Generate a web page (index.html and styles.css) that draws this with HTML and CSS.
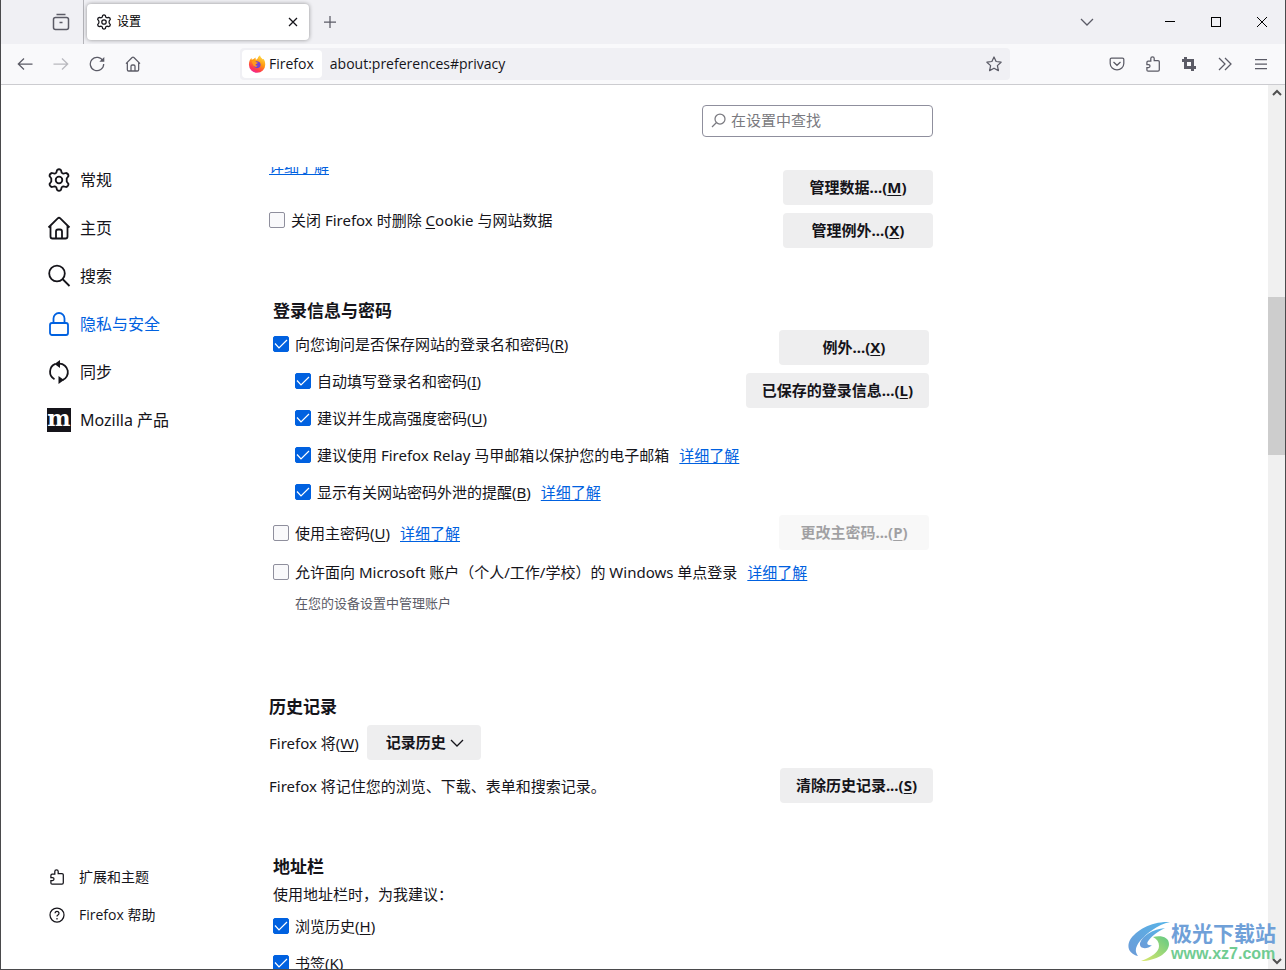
FILE: index.html
```html
<!DOCTYPE html>
<html lang="zh-CN">
<head>
<meta charset="utf-8">
<title>设置</title>
<link rel="stylesheet" href="styles.css">
</head>
<body>
<svg class="defs" aria-hidden="true">
  <symbol id="gear" viewBox="0 0 24 24"><path stroke-linejoin="round" d="M10 2.200q2-1.800 4 0l.7 2.600 1.600.9 2.700-.7q2.300.4 2.500 3l-1.800 2.500v3l1.800 2.500q-.2 2.600-2.500 3l-2.700-.7-1.600.9-.7 2.600q-2 1.800-4 0l-.7-2.600-1.600-.9-2.700.7q-2.300-.4-2.500-3l1.800-2.500v-3L2.500 8q.2-2.600 2.500-3l2.700.7 1.600-.9z"/><circle cx="12" cy="12" r="3.300"/></symbol>
  <symbol id="home" viewBox="0 0 24 24"><path d="M1.500 11.500 10.700 2.300q1.300-1.200 2.600 0l9.200 9.200M3.500 10v10.500q0 2 2 2h13q2 0 2-2V10M9 22v-6.500q0-2 2-2h2q2 0 2 2V22"/></symbol>
  <symbol id="puzzle" viewBox="0 0 16 16"><path d="M5.800 5.200V2.500a1.700 1.700 0 0 1 3.400 0V4.500h3.800q1.300 0 1.300 1.300v8q0 1.300-1.300 1.300H3.100Q1.900 15.100 1.900 13.900V11.500h1.600a1.500 1.500 0 0 0 0-3H1.900V6.400q0-1.200 1.200-1.200z"/></symbol>
</svg>
<div class="window">
  <header class="tabs">
    <button class="icon-btn view-btn" aria-label="Firefox View"><svg class="ico s18" viewBox="0 0 18 18"><path stroke-width="1.500" d="M4.500 1.500h9M1.500 6.500q0-2 2-2h11q2 0 2 2v8q0 2-2 2h-11q-2 0-2-2zM7.500 9.500h3"/></svg></button>
    <div class="tab">
      <svg class="ico s16 dark"><use href="#gear"/></svg>
      <span class="tab-title">设置</span>
      <button class="icon-btn close" aria-label="关闭标签页"><svg class="ico s10 dark" viewBox="0 0 10 10"><path d="m1 1 8 8M9 1 1 9"/></svg></button>
    </div>
    <button class="icon-btn new-tab" aria-label="新建标签页"><svg class="ico s12" viewBox="0 0 12 12"><path d="M6 0v12M0 6h12"/></svg></button>
    <span class="spacer"></span>
    <button class="icon-btn all-tabs" aria-label="列出所有标签页"><svg class="ico s14" viewBox="0 0 14 14"><path d="m1 4 6 6 6-6"/></svg></button>
    <button class="icon-btn win" aria-label="最小化"><svg class="ico s12 crisp" viewBox="0 0 12 12"><path d="M1 5.500h10"/></svg></button>
    <button class="icon-btn win" aria-label="最大化"><svg class="ico s12 crisp" viewBox="0 0 12 12"><path d="M1.500 1.500h9v9h-9z"/></svg></button>
    <button class="icon-btn win" aria-label="关闭"><svg class="ico s12 black" viewBox="0 0 12 12"><path d="m1 1 10 10M11 1 1 11"/></svg></button>
  </header>
  <nav class="toolbar">
    <button class="icon-btn" aria-label="后退"><svg class="ico s16" viewBox="0 0 16 16"><path d="M15.500 8H1.500M7 2.500 1.300 8 7 13.500"/></svg></button>
    <button class="icon-btn" aria-label="前进" disabled><svg class="ico s16" viewBox="0 0 16 16"><path d="M.500 8h14M9 2.500 14.700 8 9 13.500"/></svg></button>
    <button class="icon-btn" aria-label="刷新"><svg class="ico s16" viewBox="0 0 16 16"><path d="M14 5A6.700 6.700 0 1 0 14.700 8"/><path class="solid" d="M15.300 1v4.800h-5z"/></svg></button>
    <button class="icon-btn" aria-label="主页"><svg class="ico s16"><use href="#home"/></svg></button>
    <div class="urlbar">
      <span class="identity">
        <svg class="s18" viewBox="0 0 18 18" aria-hidden="true">
          <defs><linearGradient id="fx" x1=".8" y1="0" x2=".3" y2="1"><stop offset="0" stop-color="#ffe14a"/><stop offset=".45" stop-color="#ff980e"/><stop offset=".8" stop-color="#ff3750"/><stop offset="1" stop-color="#f0259c"/></linearGradient></defs>
          <path fill="url(#fx)" d="M1 10C.700 7 2 4.500 3.400 3l.4 1.700 1.800-.7L7.500 2.500l.3 2.200C9 4.500 10 3.500 10.200 2L12 .300c.3 2 1.500 2.600 2.600 4l1-.2C17 6 17.300 8 17.200 10A8.100 7.800 0 0 1 1 10z"/>
          <path fill="#7042d6" d="M5.600 8.800C6.500 6.200 9.500 5.600 11.300 7c1.800 1.500 1.700 4.300-.1 5.500-2 1.300-4.800.5-5.500-1.500 1.300.9 2.800.4 3.700-.5-1.600.2-2.400-.2-2.300-1.100z"/>
          <path fill="#ff9a1f" d="M3.600 6.500C5.500 5.500 7.500 6 8.500 7.200c.5.300 1.300.2 1.300.5 0 .8-1.800 1-2.100 1.700C7 10.500 8.400 11 9.800 10.400c-1.300 2-4 1.400-4.700-.6z"/>
        </svg>Firefox</span>
      <input class="url" type="text" aria-label="地址" value="about:preferences#privacy">
      <button class="icon-btn star" aria-label="添加书签"><svg class="ico s16" viewBox="0 0 16 16"><path stroke-linejoin="round" d="m8 1 2.100 4.500 5 .7-3.700 3.400 1 5L8 12.200l-4.400 2.400 1-5L.900 6.200l5-.7z"/></svg></button>
    </div>
    <span class="spacer"></span>
    <div class="tools">
      <button class="icon-btn" aria-label="Pocket"><svg class="ico s16" viewBox="0 0 16 16"><path d="M2.500 2h11q1.300 0 1.300 1.300V7.500a6.800 6.300 0 0 1-13.600 0V3.300Q1.200 2 2.500 2zM4.500 6 8 9.300 11.500 6"/></svg></button>
      <button class="icon-btn" aria-label="扩展"><svg class="ico s16"><use href="#puzzle"/></svg></button>
      <button class="icon-btn" aria-label="截图"><svg class="ico s16 thick" viewBox="0 0 16 16"><path d="M4.500 1v10.500H15M1 4.500h10.500V15"/></svg></button>
      <button class="icon-btn" aria-label="更多工具"><svg class="ico s16" viewBox="0 0 16 16"><path d="m2 2 6 6-6 6M8 2l6 6-6 6"/></svg></button>
      <button class="icon-btn" aria-label="菜单"><svg class="ico s16" viewBox="0 0 16 16"><path d="M2 3.500h12M2 8h12M2 12.500h12"/></svg></button>
    </div>
  </nav>
  <div class="page">
    <aside class="sidebar">
      <ul class="cats">
        <li><a href="#general"><svg class="ico s24"><use href="#gear"/></svg>常规</a></li>
        <li><a href="#home-page"><svg class="ico s24"><use href="#home"/></svg>主页</a></li>
        <li><a href="#search"><svg class="ico s24" viewBox="0 0 24 24"><circle cx="10" cy="9.500" r="7.800"/><path d="m15.500 15 7 7"/></svg>搜索</a></li>
        <li><a href="#privacy" class="selected"><svg class="ico s24" viewBox="0 0 24 24"><rect x="3" y="11" width="18" height="12" rx="2"/><path d="M6.500 11V6.500a5.500 5.500 0 0 1 11 0V11"/></svg>隐私与安全</a></li>
        <li><a href="#sync"><svg class="ico s24" viewBox="0 0 24 24"><path d="M8.500 3.900A8.500 8.500 0 0 0 7.500 19.300M15.500 20.100A8.500 8.500 0 0 0 12.500 3.700"/><path class="solid" d="M13 0v8L7.500 4zM11.500 24v-8l5.500 4z"/></svg>同步</a></li>
        <li><a href="#products"><span class="moz" aria-hidden="true">m</span>Mozilla 产品</a></li>
      </ul>
      <ul class="foot">
        <li><a href="#addons"><svg class="ico s16"><use href="#puzzle"/></svg>扩展和主题</a></li>
        <li><a href="#help"><svg class="ico s16" viewBox="0 0 16 16"><circle cx="8" cy="8" r="7"/><path d="M6 6.200a2 2 0 1 1 2.800 1.900Q8 8.400 8 9.600M8 11v1.400"/></svg>Firefox 帮助</a></li>
      </ul>
    </aside>
    <main class="main">
      <div class="search-row">
        <label class="search"><svg class="ico s16" viewBox="0 0 16 16"><circle cx="9" cy="6" r="5"/><path d="M5.500 9.500 1 14"/></svg><input type="search" placeholder="在设置中查找" aria-label="在设置中查找"></label>
      </div>
      <div class="scroll">
        <section class="group cookies">
          <div class="left">
            <a class="more" href="#more-cookies">详细了解</a>
            <div class="row"><label><input type="checkbox">关闭 Firefox 时删除 <u>C</u>ookie 与网站数据</label></div>
          </div>
          <div class="buttons"><button class="btn">管理数据...(<u>M</u>)</button><button class="btn">管理例外...(<u>X</u>)</button></div>
        </section>
        <section class="logins inset">
          <h2>登录信息与密码</h2>
          <div class="group">
            <div class="left">
              <div class="row"><label><input type="checkbox" checked>向您询问是否保存网站的登录名和密码(<u>R</u>)</label></div>
              <div class="row sub"><label><input type="checkbox" checked>自动填写登录名和密码(<u>I</u>)</label></div>
              <div class="row sub"><label><input type="checkbox" checked>建议并生成高强度密码(<u>U</u>)</label></div>
              <div class="row sub"><label><input type="checkbox" checked>建议使用 Firefox Relay 马甲邮箱以保护您的电子邮箱</label><a class="more" href="#relay">详细了解</a></div>
              <div class="row sub"><label><input type="checkbox" checked>显示有关网站密码外泄的提醒(<u>B</u>)</label><a class="more" href="#breach">详细了解</a></div>
            </div>
            <div class="buttons"><button class="btn">例外...(<u>X</u>)</button><button class="btn">已保存的登录信息...(<u>L</u>)</button></div>
          </div>
          <div class="group center master">
            <div class="row"><label><input type="checkbox">使用主密码(<u>U</u>)</label><a class="more" href="#master">详细了解</a></div>
            <button class="btn" disabled>更改主密码...(<u>P</u>)</button>
          </div>
          <div class="row sso"><label><input type="checkbox">允许面向 Microsoft 账户（个人/工作/学校）的 Windows 单点登录</label><a class="more" href="#sso">详细了解</a></div>
          <p class="hint">在您的设备设置中管理账户</p>
        </section>
        <section class="history">
          <h2>历史记录</h2>
          <div class="mode"><label for="mode">Firefox 将(<u>W</u>)</label><select id="mode" class="select"><option>记录历史</option></select></div>
          <div class="group center"><p>Firefox 将记住您的浏览、下载、表单和搜索记录。</p><button class="btn">清除历史记录...(<u>S</u>)</button></div>
        </section>
        <section class="address inset">
          <h2>地址栏</h2>
          <p>使用地址栏时，为我建议：</p>
          <div class="row"><label><input type="checkbox" checked>浏览历史(<u>H</u>)</label></div>
          <div class="row"><label><input type="checkbox" checked>书签(<u>K</u>)</label></div>
        </section>
      </div>
    </main>
    <div class="scrollbar" aria-hidden="true">
      <svg class="ico s10 arrow" viewBox="0 0 10 10"><path d="m1 7 4-4 4 4"/></svg>
      <span class="before"></span><span class="thumb"></span><span class="after"></span>
      <svg class="ico s10 arrow" viewBox="0 0 10 10"><path d="m1 3 4 4 4-4"/></svg>
    </div>
  </div>
</div>
<div class="watermark">
  <svg class="swirl" viewBox="0 0 42 42" aria-hidden="true">
    <defs><linearGradient id="sb" x1="1" y1="0" x2="0" y2="1"><stop offset="0" stop-color="#56b4e8"/><stop offset="1" stop-color="#6c9bd8"/></linearGradient><linearGradient id="sg" x1="1" y1="0" x2="0" y2="1"><stop offset="0" stop-color="#62c984"/><stop offset="1" stop-color="#dce86c"/></linearGradient></defs>
    <path fill="url(#sb)" d="M42 1C24 0 8 9 2 19c-4 8 0 14 8 16-4-5-2-10 2-15C19 12 29 4 42 1z"/>
    <path fill="url(#sb)" d="M37 7C25 8 14 15 12 22c-1 6 7 7 12 2-5 1-6-2-3-5 3-4 8-8 16-12z"/>
    <path fill="url(#sg)" d="M25 16c8-2 16 0 16 7 0 9-13 17-28 17 11-4 18-9 18-15 0-4-2-7-6-9z"/>
  </svg>
  <div><div class="wm-name">极光下载站</div><div class="wm-url">www.xz7.com</div></div>
</div>
</body>
</html>
```
FILE: styles.css
```css
* { box-sizing: border-box; }
body {
  margin: 0;
  height: 100vh;
  overflow: hidden;
  font: 15px/20px "Noto Sans", "Noto Sans CJK SC", sans-serif;
  color: #15141a;
  background: #fff;
}
ul, p, h2 { margin: 0; padding: 0; list-style: none; }
button, input, select { font: inherit; color: inherit; }
u { text-underline-offset: 2px; text-decoration-thickness: 1px; }
.defs { display: none; }

.window {
  display: flex;
  flex-direction: column;
  height: 100vh;
  border: solid #4a4a4c;
  border-width: 0 1px 1px;
}
.spacer { flex: 1; }
.ico { flex: none; fill: none; stroke: currentColor; stroke-width: 1.25; }
.ico .solid { fill: currentColor; stroke: none; }
.s10 { width: 10px; height: 10px; }
.s12 { width: 12px; height: 12px; }
.s14 { width: 14px; height: 14px; }
.s16 { width: 16px; height: 16px; }
.s18 { width: 18px; height: 18px; }
.s24 { width: 24px; height: 24px; stroke-width: 1.8; }
.dark { color: #15141a; }
.black { color: #000; stroke-width: 1; }
.crisp { color: #000; stroke-width: 1; shape-rendering: crispEdges; }
.thick { stroke-width: 3; }
.s16 use { stroke-width: 1.9; }
.s16 use[href="#puzzle"] { stroke-width: 1.25; }

.icon-btn {
  display: flex;
  flex: none;
  align-items: center;
  justify-content: center;
  width: 36px;
  height: 32px;
  padding: 0;
  border: 0;
  background: none;
  color: #5b5b66;
}
.icon-btn:disabled { opacity: .4; }

.tabs {
  display: flex;
  flex: none;
  align-items: center;
  height: 44px;
  background: #f0f0f4;
}
.view-btn {
  width: 83px;
  height: 44px;
  padding-left: 37px;
  border-right: 1px solid #b5b5ba;
}
.tab {
  display: flex;
  align-items: center;
  width: 222px;
  height: 36px;
  margin-left: 3px;
  padding: 0 4px 0 9px;
  border-radius: 4px;
  background: #fff;
  box-shadow: 0 0 4px rgba(0, 0, 0, .4);
}
.tab-title { flex: 1; padding-left: 5px; font-size: 12px; color: #000; }
.close { width: 24px; }
.new-tab { margin-left: 3px; }
.all-tabs { margin-right: 42px; }
.win { width: 46px; }

.toolbar {
  display: flex;
  flex: none;
  align-items: center;
  height: 41px;
  padding: 0 6px;
  border-bottom: 1px solid #ccccd0;
  background: #f9f9fb;
}
.urlbar {
  display: flex;
  align-items: center;
  flex: 0 1 770px;
  height: 32px;
  margin-left: 89px;
  padding: 2px;
  border-radius: 4px;
  background: #f0f0f4;
  font-family: "Open Sans", sans-serif;
}
.identity {
  display: flex;
  align-items: center;
  gap: 3px;
  height: 28px;
  padding: 0 8px 0 6px;
  border-radius: 4px;
  background: #fff;
  font-size: 14px;
}
.url {
  flex: 1;
  min-width: 0;
  height: 28px;
  padding: 0 8px 2px;
  border: 0;
  background: none;
  font-size: 14px;
}
.star { width: 28px; }
.tools { display: flex; }

.page { display: flex; flex: 1; min-height: 0; }
.sidebar {
  display: flex;
  flex: 0 0 268px;
  flex-direction: column;
  justify-content: space-between;
  padding: 71px 0 35px 46px;
}
.sidebar a { display: flex; align-items: center; color: inherit; text-decoration: none; }
.cats a { gap: 9px; height: 48px; font-size: 16px; }
.foot a { gap: 14px; height: 38px; padding-left: 2px; font: 14px/20px "Open Sans", "Noto Sans CJK SC", sans-serif; }
.sidebar .selected { color: #0061e0; }
.moz {
  width: 24px;
  height: 24px;
  background: #15141a;
  color: #fff;
  font: bold 22px/20px "DejaVu Serif", serif;
  text-align: center;
}

.main {
  display: flex;
  flex: 0 1 664px;
  flex-direction: column;
  min-width: 0;
}
.search-row {
  display: flex;
  flex: none;
  justify-content: flex-end;
  height: 82px;
  padding-top: 20px;
}
.search {
  display: flex;
  align-items: center;
  gap: 4px;
  width: 231px;
  height: 32px;
  padding: 0 8px;
  border: 1px solid #8f8f9d;
  border-radius: 4px;
  color: #7a7a80;
}
.search input { flex: 1; min-width: 0; padding: 0 0 2px; border: 0; outline: 0; background: none; }
.search input::placeholder { color: #7a7a80; }

.scroll { flex: 1; min-height: 0; overflow: hidden; }
.inset { padding: 0 4px; }
h2 { font-size: 17px; line-height: 24px; font-weight: 700; }
.group { display: flex; justify-content: space-between; }
.center { align-items: center; }
.left { display: flex; flex-direction: column; align-items: flex-start; }
.row { display: flex; align-items: center; gap: 10px; min-height: 20px; white-space: nowrap; }
.row label { display: flex; align-items: center; white-space: pre; }
.row input {
  flex: none;
  appearance: none;
  width: 16px;
  height: 16px;
  margin: 0 6px 0 0;
  border: 1px solid #8f8f9d;
  border-radius: 2px;
  background: #f9f9fb;
}
.row input:checked {
  border-color: #0061e0;
  background: #0061e0 url("data:image/svg+xml,%3Csvg xmlns='http://www.w3.org/2000/svg' viewBox='0 0 14 14'%3E%3Cpath d='M1 6.500l4 4.500 8-8' fill='none' stroke='white' stroke-width='1.200'/%3E%3C/svg%3E");
}
.sub { padding-left: 22px; }
.more { color: #0061e0; text-underline-offset: 2px; }
.buttons { display: flex; flex-direction: column; align-items: flex-end; gap: 8px; }
.btn {
  min-width: 150px;
  height: 35px;
  padding: 0 16px 2px;
  border: 0;
  border-radius: 4px;
  background: #eeeeef;
  font-weight: 700;
  white-space: nowrap;
}
.btn:disabled { opacity: .4; }

.cookies .left { gap: 34px; margin-top: -11px; }
.cookies .buttons { padding-top: 3px; }
.logins { padding-top: 51px; }
.logins .left { gap: 17px; padding-top: 4px; }
.logins h2 { margin-bottom: 7px; }
.master { margin-top: 13px; }
.sso { margin-top: 12px; }
.hint { margin-top: 11px; padding-left: 22px; font-size: 13px; color: #5b5b66; }
.history { padding-top: 82px; }
.mode { display: flex; align-items: center; gap: 8px; margin: 6px 0 8px; }
.select {
  appearance: none;
  width: 114px;
  height: 35px;
  padding: 0 16px 2px 19px;
  border: 0;
  border-radius: 4px;
  background: #eeeeef url("data:image/svg+xml,%3Csvg xmlns='http://www.w3.org/2000/svg' viewBox='0 0 14 14'%3E%3Cpath d='M1 4l6 6 6-6' fill='none' stroke='%2315141a' stroke-width='1.300'/%3E%3C/svg%3E") no-repeat right 17px center / 14px;
  font-weight: 700;
}
.address { padding-top: 52px; }
.address p { margin: 5px 0 12px; }
.address .row { margin-bottom: 17px; }

.scrollbar {
  display: flex;
  flex: none;
  flex-direction: column;
  align-items: center;
  width: 17px;
  margin-left: auto;
  padding: 3px 0;
  background: #f0f0f0;
}
.arrow { color: #505050; stroke-width: 2; }
.before { flex: 199; }
.thumb { flex: 158; width: 17px; background: #cdcdcd; }
.after { flex: 501; }

.watermark {
  position: absolute;
  right: 10px;
  bottom: 6px;
  display: flex;
  align-items: center;
  gap: 1px;
  pointer-events: none;
}
.swirl { width: 42px; height: 42px; }
.wm-name { color: #6fa0d8; font: bold 21px/24px "Noto Sans CJK SC", sans-serif; }
.wm-url { color: #70cc92; font: bold 16px/20px "Liberation Sans", sans-serif; }
```
